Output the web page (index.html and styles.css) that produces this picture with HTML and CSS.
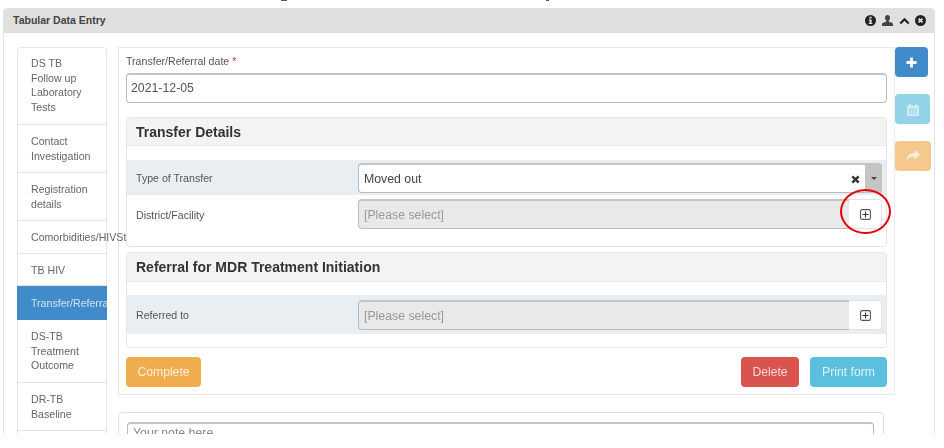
FILE: index.html
```html
<!DOCTYPE html>
<html lang="en">
<head>
<title>Tabular Data Entry</title>
<meta charset="UTF-8">
<link rel="stylesheet" href="styles.css">
</head>
<body>
<div class="shot">
 <span class="crumb crumb-a"></span>
 <span class="crumb crumb-b"></span>
 <div class="frame">
  <div class="frame-head">
   <b>Tabular Data Entry</b>
   <div class="head-icons">
    <svg width="11" height="11" viewBox="0 0 10 10"><circle cx="5" cy="5" r="5" fill="#222"/><rect x="4" y="1.600" width="2" height="1.600" fill="#e0e0e0"/><path d="M3.400 4h2.600v3.200h.7v1H3.400v-1h.7V5h-.7z" fill="#e0e0e0"/></svg>
    <svg width="13" height="12" viewBox="0 0 12 12"><path d="M6 0c1.700 0 2.500 1.200 2.500 2.800 0 1.200-.5 2.200-1.200 2.900v1c1.700.5 4.200 1 4.200 2.300v2H.5V9c0-1.300 2.500-1.800 4.200-2.300v-1C4 5 3.500 4 3.500 2.800 3.500 1.200 4.300 0 6 0z" fill="#444"/></svg>
    <svg width="11" height="8" viewBox="0 0 11 8"><path d="M1.300 6.500 5.500 2.300 9.700 6.500" fill="none" stroke="#222" stroke-width="2.300"/></svg>
    <svg width="11" height="11" viewBox="0 0 10 10"><circle cx="5" cy="5" r="5" fill="#222"/><path d="M3.200 3.200l3.600 3.600M6.800 3.200 3.200 6.800" stroke="#e0e0e0" stroke-width="1.600"/></svg>
   </div>
  </div>
  <div class="frame-body">
   <ul class="tabs">
    <li>DS TB<br>Follow up<br>Laboratory<br>Tests</li>
    <li>Contact<br>Investigation</li>
    <li>Registration<br>details</li>
    <li class="tab-one"><span class="tab-clip">Comorbidities/HIVStatus</span></li>
    <li class="tab-one tab-short">TB HIV</li>
    <li class="tab-on"><span>Transfer/Referral</span></li>
    <li class="tab-three">DS-TB<br>Treatment<br>Outcome</li>
    <li>DR-TB<br>Baseline</li>
    <li>Other</li>
   </ul>
   <div class="content">
    <div class="form-wrap">
     <div class="form">
      <label class="date-label">Transfer/Referral date <i>*</i></label>
      <div class="input date-input">2021-12-05</div>

      <section class="panel panel-first">
       <h3>Transfer Details</h3>
       <div class="rows">
        <div class="row row-tint">
         <span>Type of Transfer</span>
         <div class="input select-input">
          Moved out
          <svg class="clear" width="9" height="9" viewBox="0 0 9 9"><path d="M1.300 1.300l6.400 6.400M7.700 1.300 1.300 7.700" stroke="#333" stroke-width="2.400"/></svg>
          <span class="caret"></span>
         </div>
        </div>
        <div class="row row-plain">
         <span>District/Facility</span>
         <div class="picker">
          <div class="input picker-input">[Please select]</div>
          <div class="picker-btn">
           <svg width="11" height="11" viewBox="0 0 11 11"><rect x=".6" y=".6" width="9.800" height="9.800" rx="1.500" fill="none" stroke="#555" stroke-width="1.100"/><path d="M5.500 2.500v6M2.500 5.500h6" stroke="#333" stroke-width="1.100"/></svg>
          </div>
         </div>
        </div>
       </div>
      </section>

      <section class="panel panel-second">
       <h3>Referral for MDR Treatment Initiation</h3>
       <div class="rows">
        <div class="row row-tint row-tall">
         <span>Referred to</span>
         <div class="picker">
          <div class="input picker-input">[Please select]</div>
          <div class="picker-btn">
           <svg width="11" height="11" viewBox="0 0 11 11"><rect x=".6" y=".6" width="9.800" height="9.800" rx="1.500" fill="none" stroke="#555" stroke-width="1.100"/><path d="M5.500 2.500v6M2.500 5.500h6" stroke="#333" stroke-width="1.100"/></svg>
          </div>
         </div>
        </div>
       </div>
      </section>

      <div class="actions">
       <button class="btn btn-orange">Complete</button>
       <button class="btn btn-red">Delete</button>
       <button class="btn btn-blue">Print form</button>
      </div>
     </div>

     <div class="side">
      <div class="side-btn side-plus">
       <svg width="11" height="11" viewBox="0 0 11 11"><path d="M5.500 .5v10M.5 5.500h10" stroke="#fff" stroke-width="2.800"/></svg>
      </div>
      <div class="side-btn side-cal">
       <svg width="12" height="13" viewBox="0 0 12 13"><path d="M0 3.500a1 1 0 0 1 1-1h10a1 1 0 0 1 1 1V12a1 1 0 0 1-1 1H1a1 1 0 0 1-1-1z" fill="#d3ecf5"/><path d="M3 .5v3M9 .5v3" stroke="#d3ecf5" stroke-width="1.800"/><path d="M1 5.800h10M1 8h10M1 10.300h10M3.300 5v7M6 5v7M8.700 5v7" stroke="#93d3e8" stroke-width=".6"/></svg>
      </div>
      <div class="side-btn side-share">
       <svg width="14" height="12" viewBox="0 0 14 12"><path d="M8.500 0 14 4.700 8.500 9.400V6.600C5 6.500 2.500 7.300 1 11.500.5 6 3.500 3.100 8.500 2.900z" fill="#fbeeda"/></svg>
      </div>
     </div>
    </div>

    <div class="note">
     <div class="input note-input">Your note here</div>
    </div>
   </div>
  </div>
 </div>
 <div class="ring"></div>
</div>
</body>
</html>
```

FILE: styles.css
```css
html, body { margin: 0; height: 448px; overflow: hidden; background: #fff; }
body { font: 10.600px/15px "Liberation Sans", Arial, sans-serif; color: #555; }

.shot { position: relative; height: 434px; overflow: hidden; padding: 8px 0 0 3px;
        box-sizing: border-box; filter: blur(0.5px); }

/* bits of a cut off caption at the very top */
.crumb { position: absolute; top: 0; height: 1px; background: #555; }
.crumb-a { left: 281px; width: 6px; }
.crumb-b { left: 546px; width: 3px; }

.frame { width: 932px; height: 440px; border: 1px solid #e6e6e6; border-top: 0;
         border-radius: 4px 4px 0 0; box-sizing: border-box; }
.frame-head { height: 25px; background: #e0e0e0; border-radius: 4px 4px 0 0;
              display: flex; align-items: center; justify-content: space-between;
              padding: 0 8px 0 9px; color: #444; font-size: 10.500px; }
.head-icons { display: flex; align-items: center; gap: 5px; }
.frame-body { display: flex; padding: 14px 0 0 13px; }

/* left tabs */
.tabs { list-style: none; margin: 0 11px 0 0; padding: 0; width: 90px; flex: none;
        border: 1px solid #e8e8e8; border-bottom: 0; border-radius: 4px 4px 0 0;
        box-sizing: border-box; height: 400px; }
.tabs li { padding: 9px 13px; border-bottom: 1px solid #e4e4e4;
           line-height: 14.500px; color: #666; }
.tabs li:first-child { padding: 8px 13px 10px; }
.tabs .tab-one { padding-bottom: 8.500px; white-space: nowrap; }
.tabs .tab-short { padding-bottom: 7.500px; }
.tabs .tab-three { padding-bottom: 9.500px; }
.tab-clip { display: inline-block; width: 95px; overflow: hidden; vertical-align: top;
            position: relative; z-index: 2; }
.tabs .tab-on { background: #428bca; color: #cfe3f4; white-space: nowrap; overflow: hidden;
                margin: 0 -1px; padding: 9.750px 0 9.750px 14px; border-bottom: 0; }

/* main form */
.content { width: 818px; flex: none; }
.form-wrap { display: flex; align-items: flex-start; }
.form { width: 777px; height: 348px; flex: none; box-sizing: border-box;
        border: 1px solid #e8e8e8; border-right-color: #eee;
        padding: 6px 7px 0 7px; }
.date-label { display: block; line-height: 14px; margin-bottom: 5px; color: #555; }
.date-label i { color: #e33; font-style: normal; }

.input { border: 1px solid #bbb; border-top: 2px solid #c4c4c4; border-radius: 4px;
         box-sizing: border-box; height: 30px; background: #fff;
         display: flex; align-items: center; padding: 1px 5px 0; font-size: 12.300px; color: #555; }
.date-input { width: 761px; padding: 0 4px; }

.panel { width: 761px; border: 1px solid #e6e6e6; border-radius: 4px; box-sizing: border-box; }
.panel h3 { margin: 0; line-height: 28px; padding: 0 9px; box-sizing: border-box;
            background: #f3f3f3; border-bottom: 1px solid #e8e8e8; border-radius: 3px 3px 0 0;
            font-size: 14px; color: #333; }
.panel-first { margin-top: 14px; height: 130px; }
.panel-first h3 { height: 28px; }
.panel-second { margin-top: 5px; height: 96px; }
.panel-second h3 { height: 29px; }
.rows { padding-top: 14px; }
.panel-second .rows { padding-top: 13px; }
.row { display: flex; align-items: flex-start; justify-content: space-between;
       box-sizing: border-box; height: 39px; padding: 4px 4px 0 9px; }
.row > span { align-self: center; line-height: 14px; margin-top: -4px; }
.row-tint { background: #e9eef2; height: 35px; padding-top: 3px; }
.row-tint > span { margin-top: -3px; }
.row-tall { height: 39px; padding-top: 5px; }
.row-tall > span { margin-top: -5px; }

.select-input.input { width: 524px; padding-right: 0; color: #444; }
.clear { margin-left: auto; margin-right: 5px; }
.caret { align-self: stretch; width: 17px; margin: -3px -1px -1px 0; background: #c4c4c4;
         border-radius: 0 4px 4px 0; display: flex; align-items: center; justify-content: center; }
.caret::after { content: ""; border-style: solid; border-width: 3px 3px 0; border-color: #444 transparent transparent; }

.picker { display: flex; width: 524px; }
.picker-input.input { flex: 1; background: #e9e9e9; color: #999;
                      border-radius: 4px 0 0 4px; border-right: 0; }
.picker-btn { width: 33px; height: 30px; background: #fff; border: 1px solid #e2e2e2; border-left: 0;
              border-radius: 0 4px 4px 0; box-sizing: border-box;
              display: flex; align-items: center; justify-content: center; }

.actions { display: flex; gap: 11px; margin-top: 9px; }
.btn { height: 30px; border: 1px solid transparent; border-radius: 4px; padding: 0;
       font: 12.200px "Liberation Sans", Arial, sans-serif; color: #fff; box-sizing: border-box; }
.btn-orange { width: 75px; background: #f0ad4e; margin-right: auto; color: #fbeeda; }
.btn-red { width: 58px; background: #d9534f; color: #f6d7d6; }
.btn-blue { width: 77px; background: #5bc0de; color: #dff2f8; }

/* side buttons */
.side { display: flex; flex-direction: column; gap: 17px; flex: none; }
.side-btn { height: 30px; border-radius: 4px; display: flex; align-items: center; justify-content: center; }
.side-plus { width: 33px; background: #428bca; }
.side-cal { width: 35px; background: #92d3e8; }
.side-share { width: 36px; background: #f4c98b; }

.note { width: 766px; margin-top: 17px; height: 60px; border: 1px solid #e0e0e0; border-radius: 4px;
        box-sizing: border-box; padding: 9px 9px 0 8px; }
.note-input.input { height: 40px; align-items: flex-start; padding: 2px 5px; color: #888; }

/* highlight drawn over the screenshot */
.ring { position: absolute; left: 840px; top: 189px; width: 51px; height: 45px;
        border: 2px solid #e6000a; border-radius: 50%; box-sizing: border-box; }
```
